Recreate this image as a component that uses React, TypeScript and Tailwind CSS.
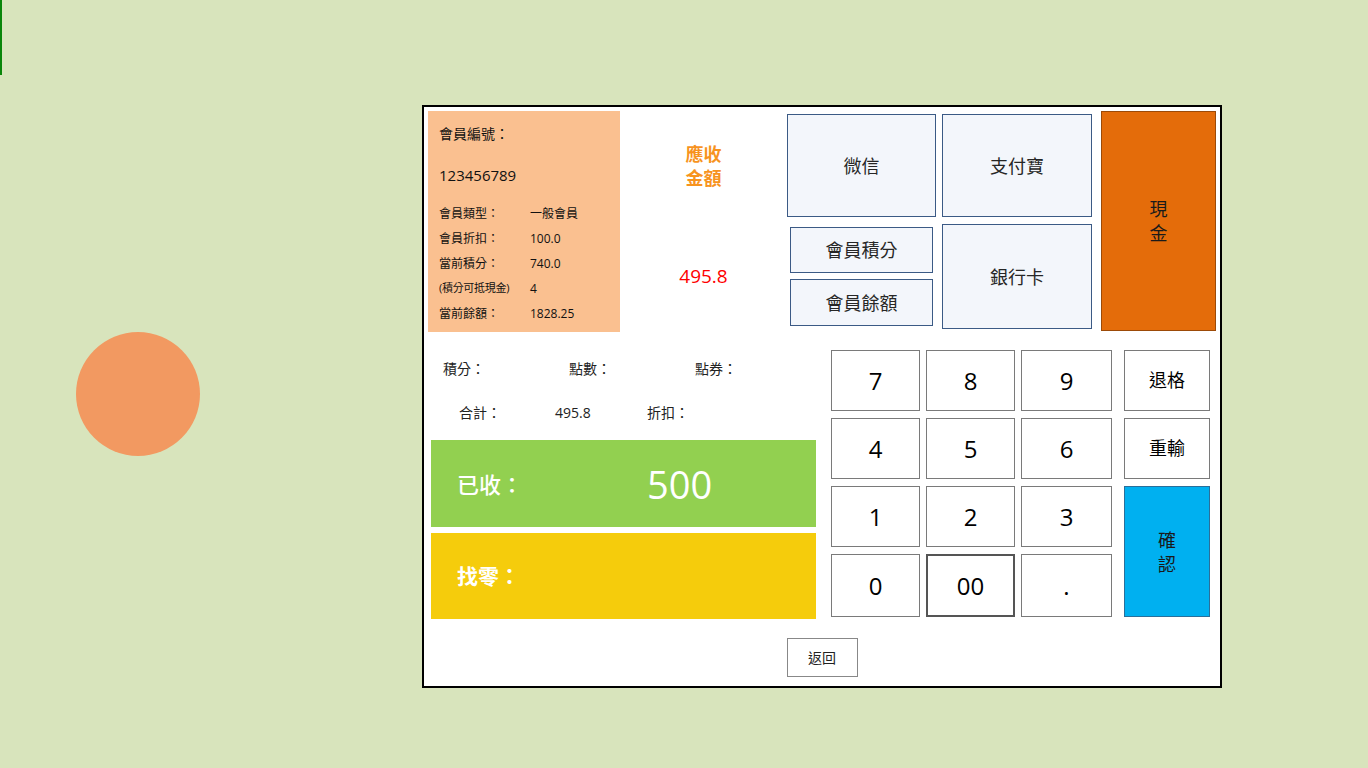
import React from "react";

const FONT = { fontFamily: '"Open Sans", "Noto Sans CJK TC", sans-serif' };

function PayBtn({ label, className }: { label: string; className: string }) {
  return (
    <div
      className={
        "flex items-center justify-center border border-[#3b5a85] bg-[#f3f6fb] text-[18px] leading-[24px] text-[#262626] " +
        className
      }
    >
      {label}
    </div>
  );
}

function Key({ label, className = "" }: { label: string; className?: string }) {
  return (
    <div
      className={
        "flex items-center justify-center border border-[#7a7a7a] bg-white text-black " + className
      }
    >
      {label}
    </div>
  );
}

export default function App() {
  const infoRows: [string, string][] = [
    ["會員類型：", "一般會員"],
    ["會員折扣：", "100.0"],
    ["當前積分：", "740.0"],
    ["(積分可抵現金)", "4"],
    ["當前餘額：", "1828.25"],
  ];
  return (
    <div className="relative w-[1368px] h-[768px] bg-[#d8e4bc] overflow-hidden" style={FONT}>
      <div className="absolute left-0 top-0 w-[2px] h-[75px] bg-[#0a860a]" />
      <div className="flex items-start">
        {/* left decorative column */}
        <div className="w-[422px] shrink-0">
          <div className="ml-[76px] mt-[332px] w-[124px] h-[124px] rounded-full bg-[#f29961]" />
        </div>

        {/* main panel */}
        <div className="mt-[105px] w-[800px] h-[583px] border-2 border-black bg-white flex flex-col shrink-0">
          {/* top row */}
          <div className="flex pt-[4px] pl-[4px]">
            <div className="w-[192px] h-[221px] bg-[#fac090] pl-[11px] pt-[13px] text-[#111]">
              <div className="h-[20px] text-[14px] leading-[20px]">會員編號：</div>
              <div className="mt-[21px] h-[20px] text-[15px] leading-[20px]">123456789</div>
              <div className="mt-[16px]">
                {infoRows.map(([k, v]) => (
                  <div key={k} className="flex h-[25px] items-center text-[12px]">
                    <div className={"w-[91px] " + (k.startsWith("(") ? "text-[11px] tracking-[-0.3px]" : "")}>{k}</div>
                    <div>{v}</div>
                  </div>
                ))}
              </div>
            </div>

            <div className="w-[167px] h-[221px] flex flex-col items-center">
              <div className="mt-[31px] text-[18px] leading-[24px] font-bold text-[#f7931e] text-center">
                應收
                <br />
                金額
              </div>
              <div className="mt-[74px] text-[19px] leading-[24px] text-[#ff0000]">495.8</div>
            </div>

            <div className="w-[149px] flex flex-col">
              <PayBtn label="微信" className="mt-[3px] h-[103px]" />
              <PayBtn label="會員積分" className="mt-[10px] mx-[3px] h-[46px]" />
              <PayBtn label="會員餘額" className="mt-[6px] mx-[3px] h-[47px]" />
            </div>
            <div className="ml-[6px] w-[150px] flex flex-col">
              <PayBtn label="支付寶" className="mt-[3px] h-[103px]" />
              <PayBtn label="銀行卡" className="mt-[7px] h-[105px]" />
            </div>
            <div className="ml-[9px] w-[115px] h-[220px] bg-[#e46c0a] border border-[#9c4a08] flex items-center justify-center text-center text-[18px] leading-[24px] text-[#1a1a1a]">
              現
              <br />
              金
            </div>
          </div>

          {/* bottom section */}
          <div className="flex">
            <div className="ml-[7px] w-[385px]">
              <div className="mt-[26px] flex h-[20px] items-center text-[14px] text-[#222]">
                <div className="pl-[12px] w-[138px]">積分：</div>
                <div className="w-[126px]">點數：</div>
                <div>點券：</div>
              </div>
              <div className="mt-[24px] flex h-[20px] items-center text-[14px] text-[#222]">
                <div className="pl-[28px] w-[124px]">合計：</div>
                <div className="w-[92px]">495.8</div>
                <div>折扣：</div>
              </div>
              <div className="mt-[18px] h-[87px] bg-[#92d050] flex items-center pl-[26px] text-white">
                <div className="w-[190px] text-[22px] leading-[28px] font-medium">已收：</div>
                <div className="text-[38px] leading-[44px] font-medium">500</div>
              </div>
              <div className="mt-[6px] h-[86px] bg-[#f5cc0c] flex items-center pl-[26px] text-white">
                <div className="text-[21px] leading-[28px] font-bold">找零：</div>
              </div>
            </div>

            <div className="ml-[15px] mt-[18px] grid grid-cols-[89px_89px_91px_0px_86px] grid-rows-[61px_61px_61px_63px] gap-x-[6px] gap-y-[7px] text-[24px]">
              <Key label="7" />
              <Key label="8" />
              <Key label="9" />
              <div />
              <Key label="退格" className="text-[18px]" />
              <Key label="4" />
              <Key label="5" />
              <Key label="6" />
              <div />
              <Key label="重輸" className="text-[18px]" />
              <Key label="1" />
              <Key label="2" />
              <Key label="3" />
              <div />
              <div className="row-span-2 flex items-center justify-center border border-[#2a6f9a] bg-[#00b0f0] text-center text-[18px] leading-[24px] text-[#1a1a1a]">
                確
                <br />
                認
              </div>
              <Key label="0" />
              <Key label="00" className="border-2 border-[#555]" />
              <Key label="." />
              <div />
            </div>
          </div>

          <div className="flex justify-center mt-[19px]">
            <div className="w-[71px] h-[39px] border border-[#888] flex items-center justify-center text-[14px] text-[#222]">
              返回
            </div>
          </div>
        </div>
      </div>
    </div>
  );
}
